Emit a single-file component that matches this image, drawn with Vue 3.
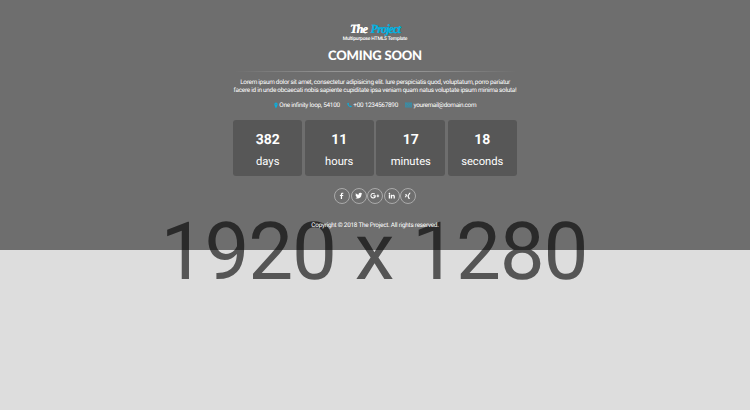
<script setup>
const counters = [
  { value: '382', label: 'days' },
  { value: '11', label: 'hours' },
  { value: '17', label: 'minutes' },
  { value: '18', label: 'seconds' },
]
const socials = [
  { name: 'facebook', d: 'M9 22V13H6V9.500H9V7C9 3.800 10.800 2 14 2H17V5.500H15C13.600 5.500 13 6.100 13 7.300V9.500H17L16.400 13H13V22Z' },
  { name: 'twitter', d: 'M23 5.200L20.700 7.600C20.800 15.200 15 21 8 21C5.300 21 3 20.300 1 19C3.700 19.200 5.900 18.500 7.700 17.100C5.600 17 4.100 15.700 3.500 14H5.500C3.300 13.300 1.900 11.600 1.900 9.300L3.900 9.900C1.900 8.200 1.500 6 2.600 3.900C5 6.800 8 8.300 11.900 8.600C11 4.700 13.600 2.500 16.400 2.500C17.700 2.500 18.900 3 19.700 3.900L22.500 2.900C22.200 4 21.500 4.900 20.600 5.600Z' },
  { name: 'google', d: 'M7 10.200H15.600C16.500 16.500 12.700 21 7 21A9 9 0 1 1 13.200 5.400L10.600 8A5.400 5.400 0 1 0 11.600 13.700H7ZM20.500 8H23.500V11H26V14H23.500V17H20.500V14H18V11H20.500Z' },
  { name: 'linkedin', d: 'M2.500 9H6.700V21H2.500ZM4.600 2.700A2.300 2.300 0 1 1 4.590 2.700ZM9 9H13V10.700C15.500 7.300 22 8 22 14V21H17.800V14.800C17.800 11.200 13.200 11.400 13.200 14.800V21H9Z' },
  { name: 'xing', d: 'M17.200 2H21.500L14.800 13L19 22H14.800L10.500 13ZM3.500 6H7.500L9.800 10.300L6.500 16.500H2.500L5.800 10.300Z' },
]
</script>

<template>
  <div class="page">
    <div class="size-mark">1920 x 1280</div>
    <main class="cover">
      <div class="logo"><span class="the">The</span> <span class="project">Project</span></div>
      <div class="slogan">Multipurpose HTML5 Template</div>
      <h1>COMING SOON</h1>
      <div class="separator"></div>
      <p class="lead">
        <span>Lorem ipsum dolor sit amet, consectetur adipisicing elit. Iure perspiciatis quod, voluptatum, porro pariatur</span>
        <span>facere id in unde obcaecati nobis sapiente cupiditate ipsa veniam quam natus voluptate ipsum minima soluta!</span>
      </p>
      <ul class="contact">
        <li>
          <svg class="pin" viewBox="0 0 12 20"><path fill-rule="evenodd" d="M6 1A5 5 0 0 1 11 6C11 10 6 19 6 19S1 10 1 6A5 5 0 0 1 6 1ZM6 4.500A1.500 1.500 0 1 0 6 7.500A1.500 1.500 0 0 0 6 4.500Z" /></svg>
          <span>One infinity loop, 54100</span>
        </li>
        <li>
          <svg class="phone" viewBox="0 0 20 20"><path d="M2 2L6 1L8 6L6 8C7.500 11 9 12.500 12 14L14 12L19 14L18 18C10 21-1 10 2 2Z" /></svg>
          <span>+00 1234567890</span>
        </li>
        <li>
          <svg class="mail" viewBox="0 0 22 18"><path d="M1 2H21V16H1Z" opacity=".35" /><path d="M1 2H21V16H1ZL11 10L21 3" fill="none" stroke="#09afdf" stroke-opacity=".6" stroke-width="1.500" /></svg>
          <span class="email">youremail@domain.com</span>
        </li>
      </ul>
      <div class="counters">
        <div v-for="c in counters" :key="c.label" class="counter">
          <strong>{{ c.value }}</strong>
          <span>{{ c.label }}</span>
        </div>
      </div>
      <div class="socials">
        <a v-for="s in socials" :key="s.name" class="social" :class="s.name">
          <svg viewBox="0 0 24 24"><path :d="s.d" /></svg>
        </a>
      </div>
      <div class="copyright">Copyright © 2018 The Project. All rights reserved.</div>
    </main>
  </div>
</template>

<style>
body {
  margin: 0;
  background: #ddd;
}
</style>

<style scoped>
.page {
  position: relative;
  height: 410px;
  overflow: hidden;
  background: #ddd;
  color: #fff;
  font-family: Roboto, "Liberation Sans", sans-serif;
  text-rendering: geometricPrecision;
}
.size-mark {
  position: absolute;
  top: 205px;
  left: -1px;
  width: 100%;
  text-align: center;
  font-size: 80px;
  line-height: 94px;
  letter-spacing: -1.1px;
  color: #555;
  white-space: nowrap;
}
.cover {
  position: relative;
  box-sizing: border-box;
  height: 250px;
  padding-top: 21px;
  display: flex;
  flex-direction: column;
  align-items: center;
  background: rgba(0, 0, 0, 0.5);
  white-space: nowrap;
}
.logo {
  height: 14px;
  font: italic 700 12.500px/16px "Liberation Serif", serif;
  letter-spacing: -1.05px;
  word-spacing: 1.500px;
  text-shadow: 0 0 0.5px currentColor;
}
.project {
  color: #09afdf;
}
.slogan {
  height: 8px;
  font-size: 5px;
  font-weight: 500;
  line-height: 8px;
  letter-spacing: -0.18px;
}
h1 {
  margin: 4px 0 0;
  height: 16px;
  font: 900 13px/16px Lato, sans-serif;
  letter-spacing: -0.2px;
}
.separator {
  width: 283px;
  height: 1px;
  margin-top: 8px;
  background: linear-gradient(to right, transparent, #949494 35%, #949494 65%, transparent);
}
.lead {
  display: flex;
  flex-direction: column;
  align-items: center;
  margin: 5.500px 0 0;
  font-size: 6.400px;
  line-height: 8.700px;
  letter-spacing: -0.265px;
}
.contact {
  display: flex;
  gap: 7px;
  margin: 5.600px 0 0;
  padding: 0;
  list-style: none;
  font-size: 6.400px;
  line-height: 9px;
  letter-spacing: -0.26px;
}
.email {
  letter-spacing: -0.33px;
}
.contact li {
  display: flex;
  align-items: center;
  gap: 1.500px;
}
.contact svg {
  height: 6px;
  fill: #09afdf;
}
.contact .pin {
  width: 4px;
  height: 7px;
}
.phone {
  width: 5px;
}
.mail {
  width: 7px;
}
.counters {
  display: grid;
  grid-template-columns: repeat(4, 69px);
  gap: 2.500px;
  margin-top: 10.500px;
}
.counter {
  box-sizing: border-box;
  height: 56px;
  padding-top: 10.500px;
  display: flex;
  flex-direction: column;
  align-items: center;
  border-radius: 3px;
  background: #575757;
}
.counter strong {
  font-size: 14px;
  line-height: 18px;
}
.counter span {
  margin-top: 5.500px;
  font-size: 11.200px;
  line-height: 15px;
}
.socials {
  display: flex;
  gap: 0.500px;
  margin-top: 12.200px;
}
.social {
  box-sizing: border-box;
  width: 16px;
  height: 16px;
  display: flex;
  align-items: center;
  justify-content: center;
  border: 1px solid #aaa;
  border-radius: 50%;
}
.social svg {
  width: 7.500px;
  height: 7.500px;
  fill: #fff;
  overflow: visible;
}
.copyright {
  margin-top: 16.500px;
  font-size: 6.400px;
  line-height: 9px;
  letter-spacing: -0.25px;
}
</style>
